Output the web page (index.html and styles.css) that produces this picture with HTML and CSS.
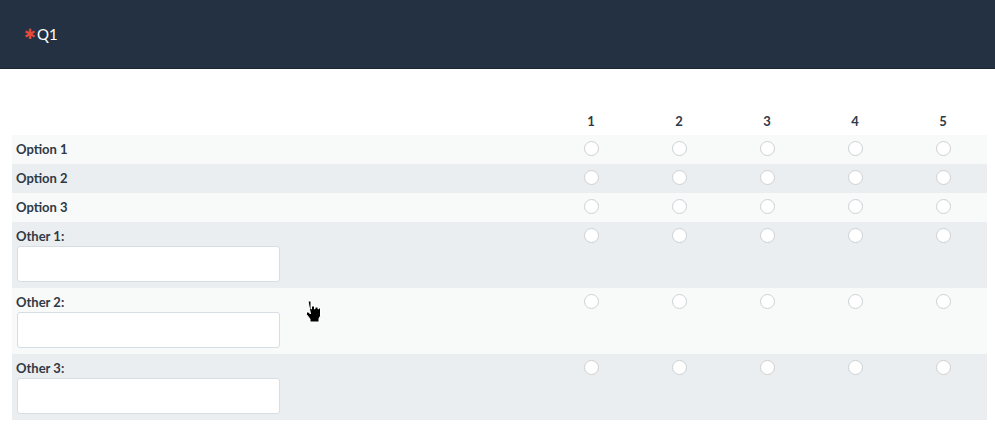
FILE: index.html
```html
<!DOCTYPE html>
<html>
<head>
<meta charset="utf-8">
<link rel="stylesheet" href="styles.css">
</head>
<body>
<header class="topbar">
  <span class="req">&#10033;</span><span class="qnum">Q1</span>
</header>
<main class="matrix">
  <div class="row head">
    <div class="label"></div>
    <div class="col">1</div><div class="col">2</div><div class="col">3</div><div class="col">4</div><div class="col">5</div>
  </div>
  <div class="row odd">
    <div class="label">Option 1</div>
    <div class="cell"><span class="radio"></span></div><div class="cell"><span class="radio"></span></div><div class="cell"><span class="radio"></span></div><div class="cell"><span class="radio"></span></div><div class="cell"><span class="radio"></span></div>
  </div>
  <div class="row even">
    <div class="label">Option 2</div>
    <div class="cell"><span class="radio"></span></div><div class="cell"><span class="radio"></span></div><div class="cell"><span class="radio"></span></div><div class="cell"><span class="radio"></span></div><div class="cell"><span class="radio"></span></div>
  </div>
  <div class="row odd">
    <div class="label">Option 3</div>
    <div class="cell"><span class="radio"></span></div><div class="cell"><span class="radio"></span></div><div class="cell"><span class="radio"></span></div><div class="cell"><span class="radio"></span></div><div class="cell"><span class="radio"></span></div>
  </div>
  <div class="row even">
    <div class="label">Other 1:<input class="other" type="text"></div>
    <div class="cell"><span class="radio"></span></div><div class="cell"><span class="radio"></span></div><div class="cell"><span class="radio"></span></div><div class="cell"><span class="radio"></span></div><div class="cell"><span class="radio"></span></div>
  </div>
  <div class="row odd">
    <div class="label">Other 2:<input class="other" type="text"></div>
    <div class="cell"><span class="radio"></span></div><div class="cell"><span class="radio"></span></div><div class="cell"><span class="radio"></span></div><div class="cell"><span class="radio"></span></div><div class="cell"><span class="radio"></span></div>
  </div>
  <div class="row even">
    <div class="label">Other 3:<input class="other" type="text"></div>
    <div class="cell"><span class="radio"></span></div><div class="cell"><span class="radio"></span></div><div class="cell"><span class="radio"></span></div><div class="cell"><span class="radio"></span></div><div class="cell"><span class="radio"></span></div>
  </div>
</main>
<svg class="cursor" width="17" height="23" viewBox="0 0 17 23">
  <path d="M4 1 h3 v8 h0.5 v-3 h3 v3 h0.5 v-2 h3 v2 h0.5 v-1 h2 v8 l-1.5 2.5 v3.5 h-9 v-3 l-3.5 -4.5 v-2.5 h2 l2 2 z" fill="#000" stroke="#fff" stroke-width="1" stroke-linejoin="miter"/>
</svg>
</body>
</html>
```
FILE: styles.css
```css
* { box-sizing: border-box; }
body {
  margin: 0;
  font-family: Lato, "Open Sans", "Liberation Sans", sans-serif;
  color: #2e3a46;
  background: #fff;
  position: relative;
}
.topbar {
  height: 69px;
  background: #243142;
  border-bottom: 1px solid #1b2532;
  display: flex;
  align-items: center;
  padding-left: 24px;
  padding-bottom: 1px;
  color: #fff;
  font-size: 14px;
}
.req {
  color: #e5493a;
  font-size: 14px;
  margin-right: 1px;
}
.qnum { font-size: 15px; }
.matrix {
  margin: 38px 8px 0 12px;
  width: 975px;
}
.row {
  display: grid;
  grid-template-columns: 535px repeat(5, 88px);
}
.row.head { height: 28px; align-items: center; }
.col {
  text-align: center;
  font-weight: 700;
  font-size: 13px;
}
.odd { background: #f8f9f9; }
.even { background: #ebeef0; }
.label {
  padding: 6px 4px 6px 4px;
  font-weight: 700;
  font-size: 13px;
  line-height: 17px;
  display: flex;
  flex-direction: column;
  align-items: flex-start;
}
.head .label { padding: 0; }
.other {
  width: 263px;
  height: 36px;
  margin: 1px 0 0 1px;
  border: 1px solid #d6dde3;
  border-radius: 3px;
  background: #fff;
  font: inherit;
}
.cell {
  display: flex;
  justify-content: center;
  padding-top: 6px;
}
.radio {
  width: 15px;
  height: 15px;
  border: 1px solid #cdd1d4;
  border-radius: 50%;
  background: #fff;
}
.cursor {
  position: absolute;
  left: 304px;
  top: 300px;
}
```
